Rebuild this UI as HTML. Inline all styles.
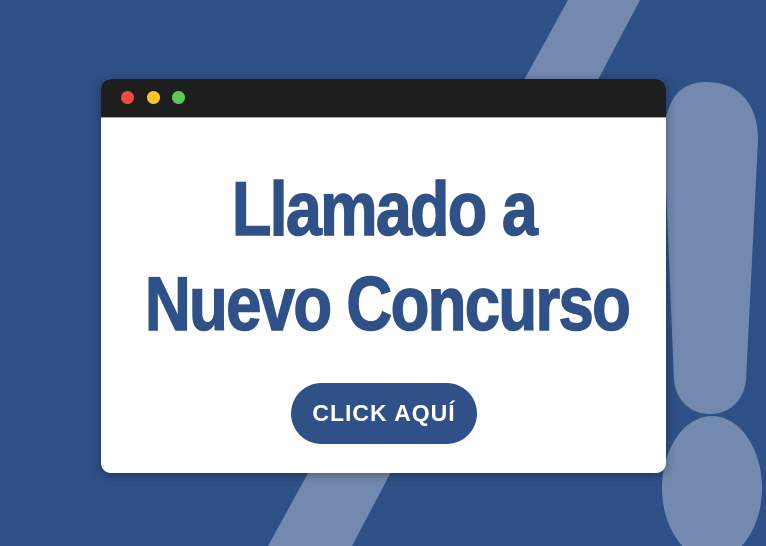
<!DOCTYPE html>
<html><head><meta charset="utf-8"><style>
html,body{margin:0;padding:0}
body{width:766px;height:546px;overflow:hidden;position:relative;background:#2f5087;
background-image:radial-gradient(circle,#3a5a92 1px,transparent 1.3px);background-size:16px 16px;font-family:"Liberation Sans",sans-serif}
svg.bg{position:absolute;left:0;top:0}
.win{position:absolute;left:101px;top:79px;width:565px;height:394px;background:#fff;border-radius:10px;overflow:hidden;box-shadow:0 2px 10px rgba(0,0,0,.35)}
.bar{height:38px;background:#1e1e1e;border-bottom:1px solid #9aa3b5}
.dot{position:absolute;top:12px;width:13px;height:13px;border-radius:50%}
.t{position:absolute;left:0;width:565px;text-align:center;color:#2f5188;font-weight:bold;font-size:76px;letter-spacing:-2px;white-space:nowrap;-webkit-text-stroke:1.5px #2f5188}
.t span{display:inline-block;transform:scaleX(.85)}
.btn{position:absolute;left:190px;top:304px;width:186px;height:61px;border-radius:31px;background:#2f5188;color:#fff;font-weight:bold;font-size:23px;line-height:61px;text-align:center;letter-spacing:1px}
</style></head><body>
<svg class="bg" width="766" height="546">
<polygon points="568,0 640,0 352,546 268,546" fill="#7489b0"/>
<path d="M706,82 C740,82 758,105 758,140 L746,380 C744,400 730,414 710,414 C690,414 676,400 674,380 L664,140 C664,105 676,82 706,82 Z" fill="#7489b0"/>
<ellipse cx="712" cy="488" rx="50" ry="72" fill="#7489b0"/>
</svg>
<div class="win">
<div class="bar"></div>
<div class="dot" style="left:20px;background:#f24a42"></div>
<div class="dot" style="left:46px;background:#f8c824"></div>
<div class="dot" style="left:71px;background:#5fc65a"></div>
<div class="t" style="top:87px"><span>Llamado a</span></div>
<div class="t" style="top:182px;left:-4px"><span style="transform:scaleX(.835)">Nuevo Concurso</span></div>
<div class="btn">CLICK AQUÍ</div>
</div>
</body></html>
